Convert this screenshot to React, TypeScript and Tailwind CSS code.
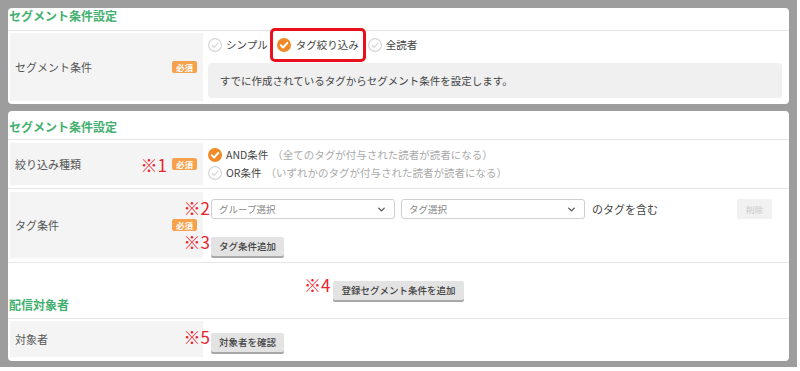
import React from 'react';
import { ChevronDown } from 'lucide-react';

// ── Small pieces ───────────────────────────────────────────────────────────

const FONT = "font-['Noto_Sans_CJK_JP','Noto_Sans',sans-serif]";

function CheckMark({ on }: { on?: boolean }) {
  return (
    <svg width="14" height="14" viewBox="0 0 14 14" className="shrink-0">
      {on ? (
        <>
          <circle cx="7" cy="7" r="7" fill="#ef8a26" />
          <path d="M3.8 7.3 L6.1 9.5 L10.3 4.9" fill="none" stroke="#fff" strokeWidth="2" strokeLinecap="round" strokeLinejoin="round" />
        </>
      ) : (
        <>
          <circle cx="7" cy="7" r="6.4" fill="#fff" stroke="#d6d6d6" strokeWidth="1.2" />
          <path d="M4 7.3 L6.1 9.3 L10 5.2" fill="none" stroke="#d6d6d6" strokeWidth="1.2" strokeLinecap="round" strokeLinejoin="round" />
        </>
      )}
    </svg>
  );
}

function Required() {
  return (
    <span className="inline-block h-[12px] px-[4px] rounded-[2px] bg-[#f6a14c] text-white text-[8.5px] font-bold leading-[12px]">
      必須
    </span>
  );
}

function Note({ n }: { n: number }) {
  return <span className="block text-[#e8242c] text-[17px] leading-[15px] whitespace-nowrap">※{n}</span>;
}

function GrayButton({ children }: { children: React.ReactNode }) {
  return (
    <button
      type="button"
      className="h-[19px] px-[8px] rounded-[2px] bg-[#e3e3e3] text-[#444] text-[9.5px] font-medium leading-[19px] shadow-[0_2px_0_#a8a8a8] whitespace-nowrap"
    >
      {children}
    </button>
  );
}

function Select({ placeholder }: { placeholder: string }) {
  return (
    <div className="flex items-center justify-between w-[184px] h-[20px] pl-[7px] pr-[7px] rounded-[3px] border border-[#cfcfcf] bg-white">
      <span className="text-[9.5px] text-[#888]">{placeholder}</span>
      <ChevronDown size={11} strokeWidth={3} color="#555" />
    </div>
  );
}

function SectionTitle({ children, className = '' }: { children: React.ReactNode; className?: string }) {
  return (
    <div className={`pl-[1px] text-[12px] font-bold leading-[16px] text-[#44b06f] border-b border-[#e6e6e6] ${className}`}>
      {children}
    </div>
  );
}

// ── Table row ──────────────────────────────────────────────────────────────

function Row({
  label,
  note,
  required,
  labelH,
  className = '',
  children,
}: {
  label: string;
  note?: number;
  required?: boolean;
  labelH: string;
  className?: string;
  children: React.ReactNode;
}) {
  return (
    <div className={`flex pl-[2px] ${className}`}>
      <div className={`flex items-center w-[193px] ${labelH} pl-[5px] pr-[6px] bg-[#f4f4f4] shrink-0`}>
        <span className="text-[11px] text-[#555]">{label}</span>
        <span className="ml-auto flex items-center gap-[5px]">
          {note && <Note n={note} />}
          {required && <Required />}
        </span>
      </div>
      <div className="flex-1 min-w-0 pl-[5px] pr-[7px]">{children}</div>
    </div>
  );
}

// ── Page ───────────────────────────────────────────────────────────────────

export default function App() {
  return (
    <div className={`w-[800px] h-[371px] bg-white ${FONT}`}>
      <div className="w-[797px] h-[367px] bg-[#9d9d9d] p-[8px] pb-[6px] flex flex-col gap-[7px]">
        {/* Panel 1 */}
        <div className="bg-white rounded-[4px]">
          <SectionTitle className="h-[23px]">セグメント条件設定</SectionTitle>
          <Row label="セグメント条件" required labelH="h-[68px]" className="pt-[2px] pb-[3px]">
            <div className="flex flex-col h-full pt-[4px]">
              <div className="flex items-center gap-[9px] h-[16px] text-[10.5px] text-[#444]">
                <span className="flex items-center gap-[4px]">
                  <CheckMark />
                  シンプル
                </span>
                <span className="relative flex items-center gap-[5px]">
                  <span className="absolute -left-[7px] -right-[7px] -top-[9px] -bottom-[9px] border-[3px] border-[#e8101c] rounded-[5px]" />
                  <CheckMark on />
                  タグ絞り込み
                </span>
                <span className="flex items-center gap-[4px]">
                  <CheckMark />
                  全読者
                </span>
              </div>
              <div className="mt-[10px] h-[35px] flex items-center px-[12px] rounded-[4px] bg-[#f0f0f0] text-[10.5px] text-[#444]">
                すでに作成されているタグからセグメント条件を設定します。
              </div>
            </div>
          </Row>
        </div>

        {/* Panel 2 */}
        <div className="flex-1 bg-white rounded-[4px]">
          <SectionTitle className="h-[29px] pt-[8px]">セグメント条件設定</SectionTitle>

          <Row label="絞り込み種類" note={1} required labelH="h-[42px]" className="py-[3px] border-b border-[#e6e6e6]">
            <div className="flex flex-col justify-center h-full gap-[2px] text-[10.5px] leading-[16px]">
              <div className="flex items-center gap-[4px]">
                <CheckMark on />
                <span className="text-[#444]">AND条件</span>
                <span className="text-[#aaa]">（全てのタグが付与された読者が読者になる）</span>
              </div>
              <div className="flex items-center gap-[4px]">
                <CheckMark />
                <span className="text-[#444]">OR条件</span>
                <span className="text-[#aaa]">（いずれかのタグが付与された読者が読者になる）</span>
              </div>
            </div>
          </Row>

          <Row label="タグ条件" required labelH="h-[66px]" className="pt-[3px] pb-[4px] border-b border-[#e6e6e6]">
            <div className="flex flex-col items-start pl-[3px] pt-[7px] gap-[12px]">
              <div className="relative flex items-center w-full">
                <span className="absolute right-full mr-[1px] top-[1px]">
                  <Note n={2} />
                </span>
                <Select placeholder="グループ選択" />
                <span className="ml-[6px]" />
                <Select placeholder="タグ選択" />
                <span className="ml-[7px] text-[11px] text-[#444]">のタグを含む</span>
                <button
                  type="button"
                  className="ml-auto mr-[10px] w-[35px] h-[20px] rounded-[2px] bg-[#f1f1f1] text-[8.5px] text-[#c9c9c9]"
                >
                  削除
                </button>
              </div>
              <div className="relative">
                <span className="absolute right-full mr-[1px] top-[3px]">
                  <Note n={3} />
                </span>
                <GrayButton>タグ条件追加</GrayButton>
              </div>
            </div>
          </Row>

          {/* Add registered segment */}
          <div className="h-[33px] flex justify-center pt-[12px]">
            <div className="relative">
              <span className="absolute right-full mr-[3px] top-[2px]">
                <Note n={4} />
              </span>
              <GrayButton>登録セグメント条件を追加</GrayButton>
            </div>
          </div>

          <SectionTitle className="h-[23px] pt-[1px]">配信対象者</SectionTitle>

          <Row label="対象者" labelH="h-[36px]" className="pt-[2px] pb-[3px]">
            <div className="flex items-center h-full pl-[3px]">
              <div className="relative">
                <span className="absolute right-full mr-[1px] top-[2px]">
                  <Note n={5} />
                </span>
                <GrayButton>対象者を確認</GrayButton>
              </div>
            </div>
          </Row>
        </div>
      </div>
    </div>
  );
}
